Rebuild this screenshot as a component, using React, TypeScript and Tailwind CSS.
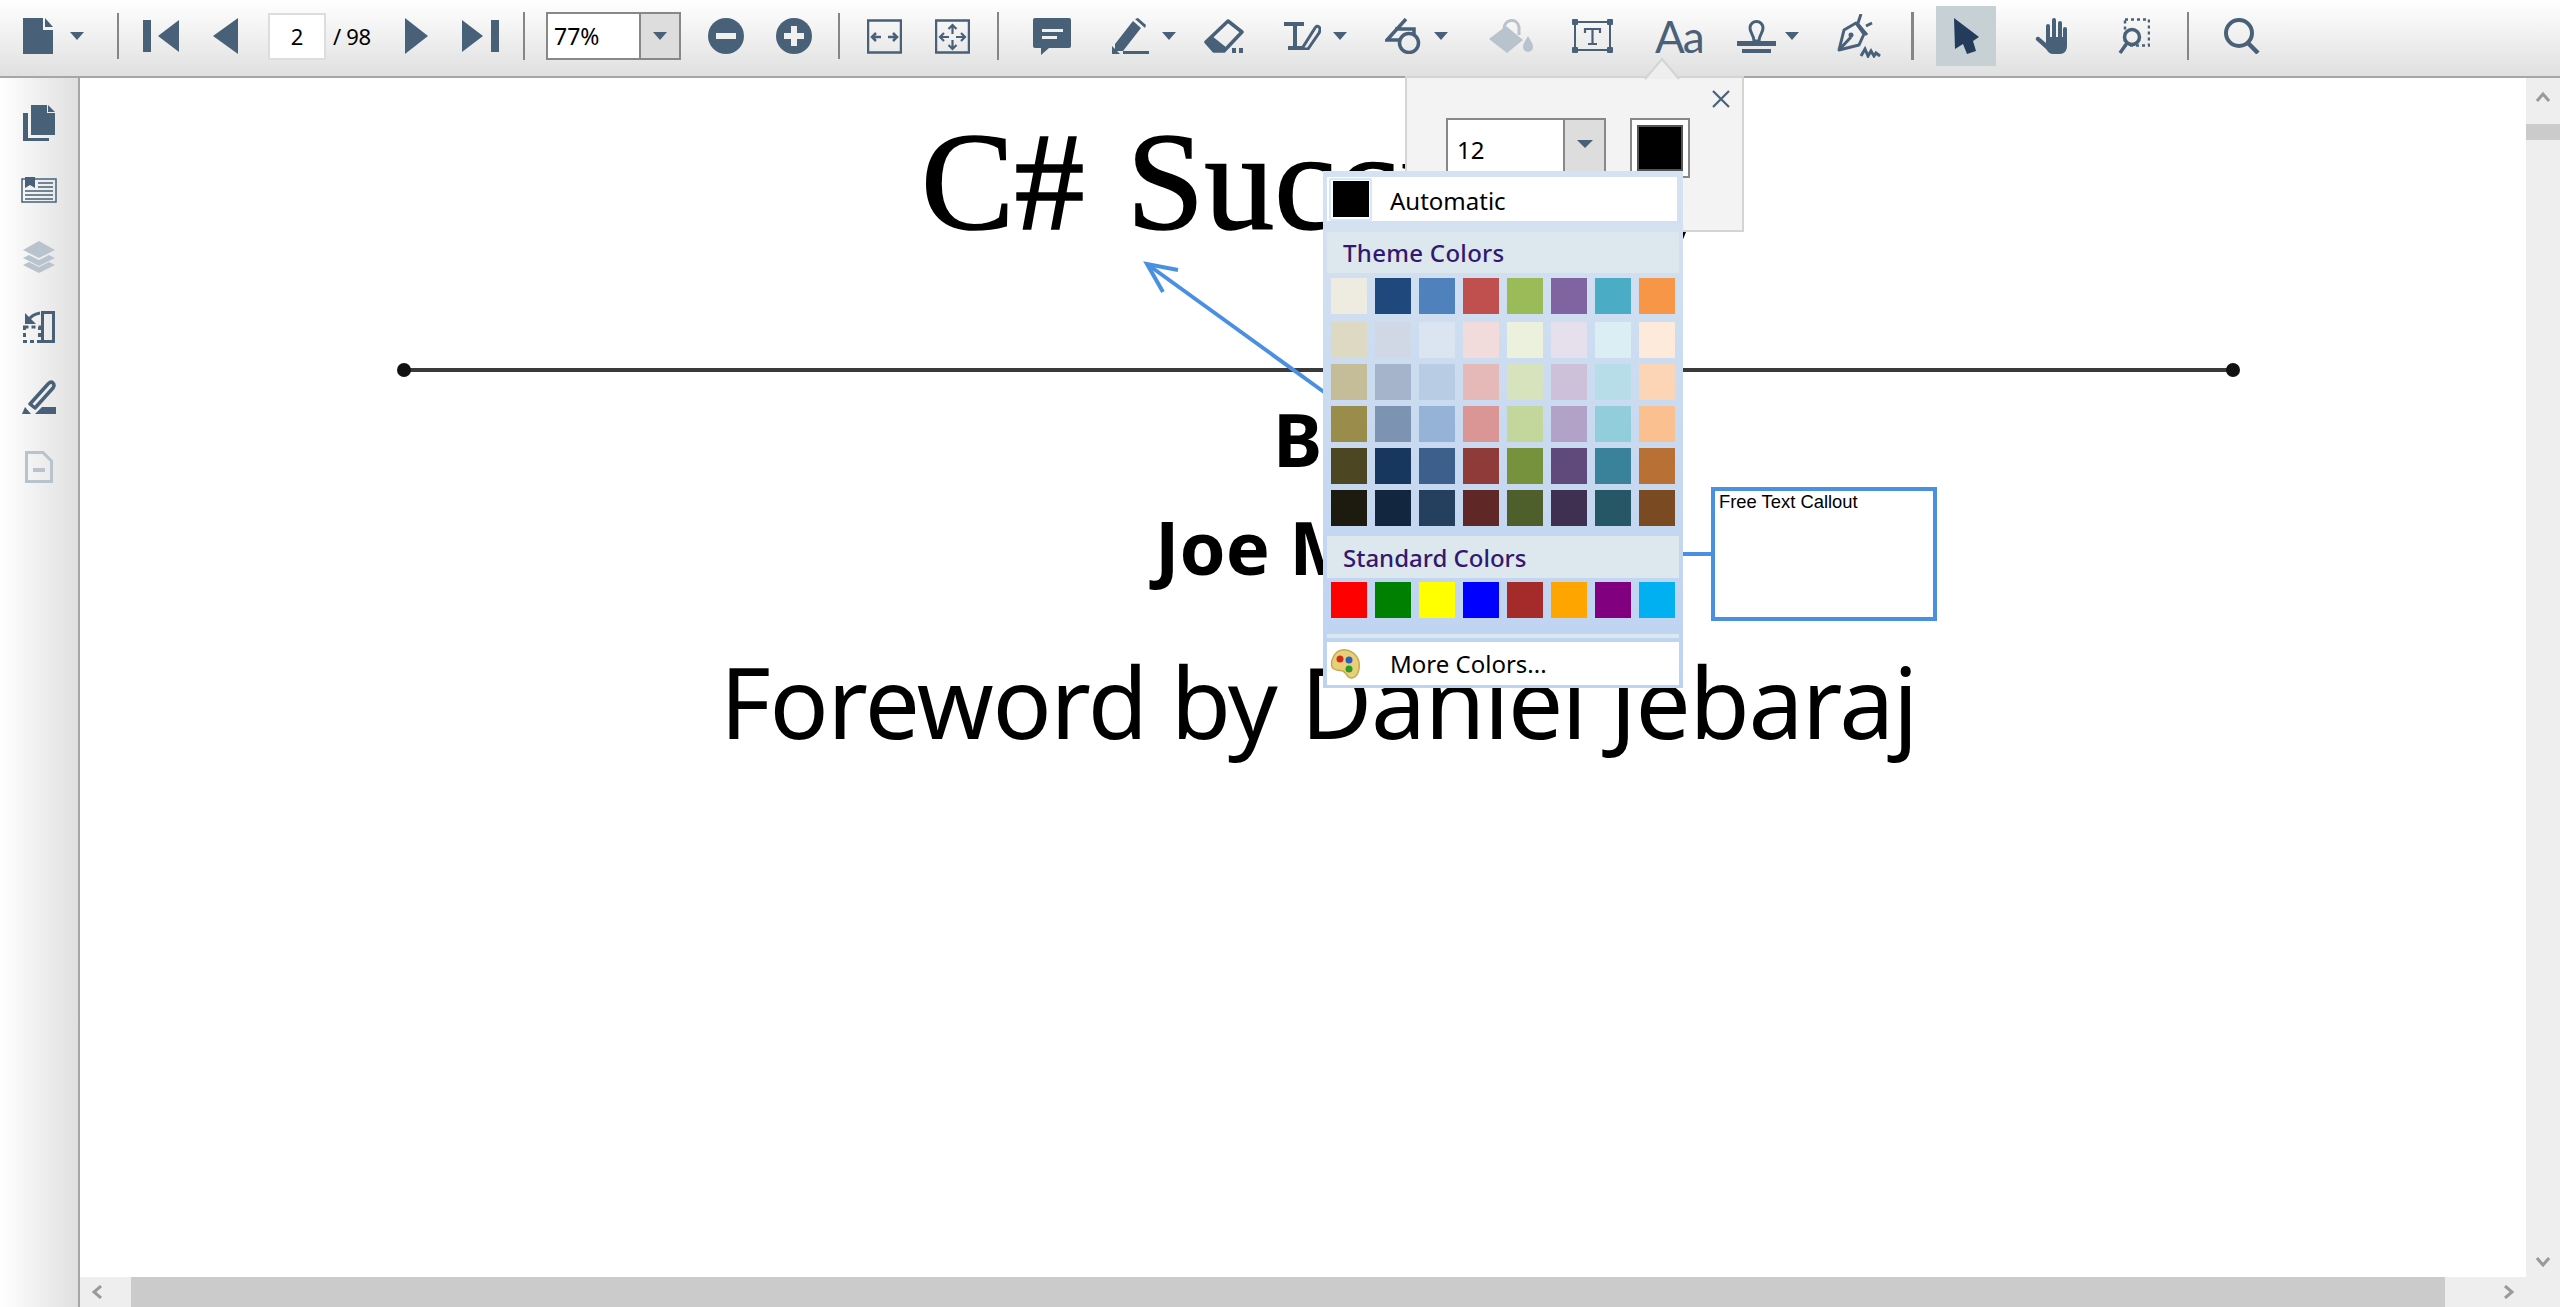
import type { ReactNode } from 'react';

const UI_FONT = "font-['Noto_Sans',sans-serif]";

const THEME_ROWS = [
  ['bg-[#eeece1]', 'bg-[#1f497d]', 'bg-[#4f81bd]', 'bg-[#c0504d]', 'bg-[#9bbb59]', 'bg-[#8064a2]', 'bg-[#4bacc6]', 'bg-[#f79646]'],
  ['bg-[#ddd9c3]', 'bg-[#d0d8e6]', 'bg-[#dbe5f1]', 'bg-[#f2dcdb]', 'bg-[#ebf1dd]', 'bg-[#e5e0ec]', 'bg-[#dbeef3]', 'bg-[#fdeada]'],
  ['bg-[#c4bd97]', 'bg-[#a5b4cb]', 'bg-[#b8cce4]', 'bg-[#e5b9b7]', 'bg-[#d7e3bc]', 'bg-[#ccc1d9]', 'bg-[#b7dde8]', 'bg-[#fbd5b5]'],
  ['bg-[#9a8d4c]', 'bg-[#7c93b2]', 'bg-[#95b3d7]', 'bg-[#d99694]', 'bg-[#c3d69b]', 'bg-[#b2a2c7]', 'bg-[#92cddc]', 'bg-[#fac08f]'],
  ['bg-[#4d4622]', 'bg-[#17375e]', 'bg-[#3c5f8c]', 'bg-[#8f3b39]', 'bg-[#76923c]', 'bg-[#604a7b]', 'bg-[#39829a]', 'bg-[#b87035]'],
  ['bg-[#1d1b10]', 'bg-[#12263f]', 'bg-[#25405f]', 'bg-[#5f2725]', 'bg-[#4f5f2c]', 'bg-[#3f3051]', 'bg-[#255767]', 'bg-[#7a4a22]'],
];

const STANDARD_ROW = ['bg-[#ff0000]', 'bg-[#008000]', 'bg-[#ffff00]', 'bg-[#0000ff]', 'bg-[#a52a2a]', 'bg-[#ffa500]', 'bg-[#800080]', 'bg-[#00b0f0]'];

// Small wrapper so every icon is drawn in its own pixel box
function Ico({ w, h, className = '', children }: { w: number; h: number; className?: string; children: ReactNode }) {
  return (
    <svg width={w} height={h} viewBox={`0 0 ${w} ${h}`} fill="currentColor" className={`shrink-0 ${className}`}>
      {children}
    </svg>
  );
}

function Caret({ className = '' }: { className?: string }) {
  return (
    <Ico w={14} h={8} className={className}>
      <path d="M0 0h14L7 8z" />
    </Ico>
  );
}

function Sep({ className = '' }: { className?: string }) {
  return <div className={`h-[46px] w-[2px] shrink-0 bg-[#868686] ${className}`} />;
}

function ColorRow({ colors, className = '' }: { colors: string[]; className?: string }) {
  return (
    <div className={`ml-[8px] flex gap-[8px] ${className}`}>
      {colors.map((c, i) => (
        <div key={i} className={`h-[36px] w-[36px] ${c}`} />
      ))}
    </div>
  );
}

function Toolbar() {
  return (
    <div className={`flex h-[78px] w-full shrink-0 items-center border-b-2 border-[#a6a6a6] bg-gradient-to-b from-white to-[#e0e0e0] pb-[4px] pl-[23px] text-[#486179] ${UI_FONT}`}>
      <Ico w={30} h={36}>
        <path d="M0 0h20v12h10v24H0z" />
        <path d="M22 0l8 9h-8z" />
      </Ico>
      <Caret className="ml-[17px]" />
      <Sep className="ml-[33px]" />
      <Ico w={36} h={32} className="ml-[24px]">
        <rect width="8" height="32" />
        <path d="M36 0v32L15 16z" />
      </Ico>
      <Ico w={25} h={36} className="ml-[34px]">
        <path d="M25 0v36L0 18z" />
      </Ico>
      <div className="ml-[30px] flex h-[47px] w-[58px] shrink-0 items-center justify-center border-2 border-[#dddddd] bg-white text-[22px] text-black">2</div>
      <span className="ml-[7px] w-[41px] shrink-0 whitespace-nowrap text-[22px] tracking-[-0.3px] text-black">/ 98</span>
      <Ico w={23} h={36} className="ml-[31px]">
        <path d="M0 0v36l23-18z" />
      </Ico>
      <Ico w={37} h={32} className="ml-[34px]">
        <path d="M0 0v32l21-16z" />
        <rect x="29" width="8" height="32" />
      </Ico>
      <Sep className="ml-[24px] h-[48px]" />
      <div className="ml-[21px] flex h-[48px] w-[135px] shrink-0 border-2 border-[#888888] bg-white">
        <div className="flex w-[91px] items-center pl-[6px] text-[23px] text-black">77%</div>
        <div className="flex flex-1 items-center justify-center border-l-2 border-[#888888] bg-[#dddddd]">
          <Caret />
        </div>
      </div>
      <Ico w={36} h={36} className="ml-[27px]">
        <circle cx="18" cy="18" r="18" />
        <rect x="8" y="15" width="20" height="6" fill="#f0f0f0" />
      </Ico>
      <Ico w={36} h={36} className="ml-[32px]">
        <circle cx="18" cy="18" r="18" />
        <path d="M15 8h6v7h7v6h-7v7h-6v-7H8v-6h7z" fill="#f0f0f0" />
      </Ico>
      <Sep className="ml-[26px]" />
      <Ico w={35} h={35} className="ml-[27px]">
        <rect x="1" y="1.5" width="33" height="32" fill="none" stroke="currentColor" strokeWidth="2.5" />
        <path d="M5 18h9M9 14l-4 4 4 4M30 18h-9M26 14l4 4-4 4" fill="none" stroke="currentColor" strokeWidth="2.5" />
      </Ico>
      <Ico w={35} h={35} className="ml-[33px]">
        <rect x="1" y="1.5" width="33" height="32" fill="none" stroke="currentColor" strokeWidth="2.5" />
        <path d="M5 18h9M9 14l-4 4 4 4M30 18h-9M26 14l4 4-4 4M17.5 6v9M13.5 10l4-4 4 4M17.5 30v-9M13.5 26l4 4 4-4" fill="none" stroke="currentColor" strokeWidth="2.2" />
      </Ico>
      <Sep className="ml-[27px] h-[48px]" />
      <Ico w={38} h={37} className="ml-[34px]">
        <path d="M2 0h34a2 2 0 0 1 2 2v26a2 2 0 0 1-2 2H16l-8 7v-7H2a2 2 0 0 1-2-2V2a2 2 0 0 1 2-2z" />
        <rect x="9" y="11" width="21" height="3" fill="#f0f0f0" />
        <rect x="9" y="18" width="15" height="3" fill="#f0f0f0" />
      </Ico>
      <Ico w={37} h={36} className="ml-[41px]">
        <path d="M3 26L21 3l8 7-18 23H3z" />
        <path d="M23 1l3-1 8 7-1 3z" />
        <path d="M0 28l8 8H0z" />
        <rect x="11" y="33" width="26" height="3" />
      </Ico>
      <Caret className="ml-[13px]" />
      <Ico w={40} h={34} className="ml-[28px]">
        <path d="M24 2l14 11-18 19H10l-8-9z" fill="none" stroke="currentColor" strokeWidth="3.5" strokeLinejoin="round" />
        <path d="M8 17l15 12-4 3H10l-8-9z" />
        <rect x="28" y="29" width="4" height="5" />
        <rect x="35" y="29" width="4" height="5" />
      </Ico>
      <Ico w={37} h={28} className="ml-[40px]">
        <path d="M0 0h20v4h-7v20h5v4H4v-4h5V4H0z" />
        <path d="M19 25L31 6q2-3 4-1t0 6L24 27h-5z" fill="none" stroke="currentColor" strokeWidth="3" />
      </Ico>
      <Caret className="ml-[12px]" />
      <Ico w={36} h={36} className="ml-[38px]">
        <path d="M21 1L2 22h13M10 11h19v7" fill="none" stroke="currentColor" strokeWidth="3.5" />
        <circle cx="24" cy="25" r="9.5" fill="none" stroke="currentColor" strokeWidth="3.5" />
      </Ico>
      <Caret className="ml-[13px]" />
      <Ico w={44} h={34} className="ml-[41px] text-[#b8c3ce]">
        <path d="M17 7l17 14-16 13L0 20z" />
        <path d="M15 10C15 0 28-2 30 8v8" fill="none" stroke="currentColor" strokeWidth="3" />
        <path d="M39 17c2 4 5 7 5 11a5 5 0 0 1-10 0c0-4 3-7 5-11z" />
      </Ico>
      <Ico w={41} h={34} className="ml-[39px]">
        <rect x="3" y="3" width="35" height="28" fill="none" stroke="currentColor" strokeWidth="2" />
        <rect width="6" height="6" rx="1" />
        <rect x="35" width="6" height="6" rx="1" />
        <rect y="28" width="6" height="6" rx="1" />
        <rect x="35" y="28" width="6" height="6" rx="1" />
        <path d="M13 14v-4h15v4M20.5 10v15M16 25h9" fill="none" stroke="currentColor" strokeWidth="2.2" />
      </Ico>
      <span className="ml-[42px] w-[45px] shrink-0 whitespace-nowrap font-['Lato',sans-serif] text-[44px] leading-none font-normal tracking-[-2px] text-[#486179]">Aa</span>
      <Ico w={39} h={33} className="ml-[37px]">
        <path d="M19.5 1.5a6.5 6.5 0 0 1 6.5 6.5c0 5-4 7-4 13h-5c0-6-4-8-4-13a6.5 6.5 0 0 1 6.5-6.5z" fill="none" stroke="currentColor" strokeWidth="3" />
        <rect y="21" width="39" height="5" />
        <rect x="5" y="29" width="29" height="4" />
      </Ico>
      <Caret className="ml-[9px]" />
      <Ico w={44} h={44} className="ml-[38px]">
        <path d="M2 36L7 16l12-7 8 11-5 11z" fill="none" stroke="currentColor" strokeWidth="3" strokeLinejoin="round" />
        <path d="M24 0l-3 9M20 9l10 12M29 12l6-3M2 36l12-13" fill="none" stroke="currentColor" strokeWidth="3" />
        <circle cx="14" cy="21" r="2.5" />
        <path d="M24 42l4-7 3 7 3-5 3 5 2-3 4 3" fill="none" stroke="currentColor" strokeWidth="3" />
      </Ico>
      <Sep className="ml-[30px] h-[48px] w-[3px]" />
      <div className="ml-[22px] flex h-[60px] w-[60px] shrink-0 items-center justify-center bg-[#c6d0d5]">
        <Ico w={25} h={36} className="text-[#243c5c]">
          <path d="M0 0l25 19-6 4 3 10-9 3-4-10-8 5z" />
        </Ico>
      </div>
      <Ico w={32} h={36} className="ml-[39px]">
        <rect x="11" y="6" width="4" height="18" rx="2" />
        <rect x="17" width="4" height="22" rx="2" />
        <rect x="23" y="3" width="4" height="20" rx="2" />
        <rect x="28" y="9" width="4" height="15" rx="2" />
        <path d="M11 19h21v9c0 5-3 8-7 8h-7c-3 0-5-2-7-5L1 22c-1-2 1-4 3-3l7 6z" />
      </Ico>
      <Ico w={32} h={36} className="ml-[51px]">
        <rect x="7" y="1.5" width="24" height="26" fill="none" stroke="currentColor" strokeWidth="2.5" strokeDasharray="3 3" />
        <circle cx="14" cy="19" r="7.5" fill="none" stroke="currentColor" strokeWidth="3.5" />
        <path d="M9 25l-7 10" fill="none" stroke="currentColor" strokeWidth="3.5" />
      </Ico>
      <Sep className="ml-[37px] h-[48px]" />
      <Ico w={36} h={36} className="ml-[35px]">
        <circle cx="15" cy="15" r="13" fill="none" stroke="currentColor" strokeWidth="4" />
        <path d="M24 25l10 10" fill="none" stroke="currentColor" strokeWidth="4.5" />
      </Ico>
    </div>
  );
}

function Rail() {
  return (
    <div className="flex w-[80px] shrink-0 flex-col items-center border-r-2 border-[#a6a6a6] bg-gradient-to-r from-white to-[#e0e0e0] pt-[27px] text-[#486179]">
      <Ico w={32} h={36}>
        <path d="M8 0h16v8h8v22H8z" />
        <path d="M25 0l7 7h-7z" />
        <path d="M0 8h5v25h21v3H0z" />
      </Ico>
      <Ico w={36} h={26} className="mt-[36px]">
        <rect x="1" y="2" width="34" height="23" fill="none" stroke="currentColor" strokeWidth="1.5" />
        <path d="M4 0h10v11l-5-3-5 3z" />
        <path d="M17 6h15M17 10h15M4 14h28M4 18h28M4 22h28" fill="none" stroke="currentColor" strokeWidth="1.5" />
      </Ico>
      <Ico w={32} h={32} className="mt-[38px] text-[#b8c3ce]">
        <path d="M16 0l16 9-16 8L0 9z" />
        <path d="M0 17l6-3 10 5 10-5 6 3-16 8z" />
        <path d="M0 24l6-3 10 5 10-5 6 3-16 8z" />
      </Ico>
      <Ico w={32} h={32} className="mt-[38px]">
        <rect x="19.5" y="1.5" width="11" height="29" fill="none" stroke="currentColor" strokeWidth="3" />
        <rect x="1.5" y="16" width="15" height="14.5" fill="none" stroke="currentColor" strokeWidth="3" strokeDasharray="4 3" />
        <path d="M17 2C11 3 7 6 5 10" fill="none" stroke="currentColor" strokeWidth="3" />
        <path d="M2 2v11h11z" />
      </Ico>
      <Ico w={34} h={34} className="mt-[37px]">
        <path d="M8 24L26 4q3-3 5-1t0 5L13 28z" fill="none" stroke="currentColor" strokeWidth="3.5" strokeLinejoin="round" />
        <path d="M0 34l3-7 6 7z" />
        <path d="M13 34l7-7h14v7z" />
      </Ico>
      <Ico w={28} h={32} className="mt-[37px] text-[#b8c3ce]">
        <path d="M1.5 1.5H18l8.5 8.5v20.5h-25z" fill="none" stroke="currentColor" strokeWidth="3" />
        <rect x="8" y="17" width="12" height="4" />
      </Ico>
    </div>
  );
}

// Page content: the PDF is a free canvas, so text and annotations sit at their own coordinates
function PdfPage() {
  return (
    <div className="relative flex-1 overflow-hidden bg-white text-black">
      <div className="absolute left-[841px] top-[24px] whitespace-nowrap font-['Liberation_Serif',serif] text-[140px] leading-[160px] [-webkit-text-stroke:1.5px_#000] [word-spacing:7px]">C# Succinctly</div>
      <div className={`absolute left-[1193px] top-[311px] whitespace-nowrap text-[74px] leading-[100px] font-bold tracking-[8px] ${UI_FONT}`}>By</div>
      <div className={`absolute left-[1075px] top-[419px] whitespace-nowrap text-[74px] leading-[100px] font-bold ${UI_FONT}`}>Joe Mayo</div>
      <div className={`absolute left-[640px] top-[558px] whitespace-nowrap text-[98px] leading-[130px] tracking-[-1.3px] ${UI_FONT}`}>Foreword by Daniel Jebaraj</div>
      <svg className="absolute left-0 top-0" width="2446" height="700" viewBox="0 0 2446 700">
        <path d="M324 292H2153" stroke="#3a3a3a" strokeWidth="4" fill="none" />
        <circle cx="324" cy="292" r="7" fill="#111111" />
        <circle cx="2153" cy="292" r="7" fill="#111111" />
        <path d="M1067 186L1244 314" stroke="#4a90e2" strokeWidth="4" fill="none" />
        <path d="M1098 192L1067 186L1083 214" stroke="#4a90e2" strokeWidth="4" fill="none" />
        <path d="M1600 476H1631" stroke="#4a90e2" strokeWidth="4" fill="none" />
      </svg>
      <div className="absolute left-[1631px] top-[409px] h-[134px] w-[226px] border-4 border-[#4a90e2] bg-white pl-[4px] pt-[1px] font-['Liberation_Sans',sans-serif] text-[18.4px] leading-[20px] text-black">Free Text Callout</div>
    </div>
  );
}

function VerticalScrollbar() {
  return (
    <div className="flex w-[34px] shrink-0 flex-col items-center bg-[#eeeeee] pb-[10px] pt-[13px] text-[#9a9a9a]">
      <Ico w={14} h={11}>
        <path d="M1 10l6-7 6 7" fill="none" stroke="currentColor" strokeWidth="3" />
      </Ico>
      <div className="mt-[22px] h-[16px] w-full bg-[#cbcbcb]" />
      <div className="flex-1" />
      <Ico w={14} h={10}>
        <path d="M1 1l6 7 6-7" fill="none" stroke="currentColor" strokeWidth="3" />
      </Ico>
    </div>
  );
}

function HorizontalScrollbar() {
  return (
    <div className="flex h-[30px] shrink-0 items-center bg-[#eeeeee] text-[#9a9a9a]">
      <div className="flex w-[51px] shrink-0 items-center pl-[12px]">
        <Ico w={10} h={14}>
          <path d="M9 1L2 7l7 6" fill="none" stroke="currentColor" strokeWidth="3" />
        </Ico>
      </div>
      <div className="h-full flex-1 bg-[#cbcbcb]" />
      <div className="flex w-[115px] shrink-0 items-center pl-[59px]">
        <Ico w={10} h={14}>
          <path d="M1 1l7 6-7 6" fill="none" stroke="currentColor" strokeWidth="3" />
        </Ico>
      </div>
    </div>
  );
}

function FreeTextPanel() {
  return (
    <div className={`absolute left-[1405px] top-[76px] h-[156px] w-[339px] border-2 border-[#d4d4d4] bg-[#f3f3f3] pl-[39px] pt-[40px] ${UI_FONT}`}>
      <svg className="absolute left-[237px] top-[-20px]" width="36" height="22" viewBox="0 0 36 22">
        <path d="M1 21L18 1l17 20" fill="#eeeeee" stroke="#d4d4d4" strokeWidth="2" />
      </svg>
      <button className="absolute left-[305px] top-[12px] text-[#486179]">
        <Ico w={18} h={18} className="block">
          <path d="M1 1l16 16M17 1L1 17" fill="none" stroke="currentColor" strokeWidth="2.2" />
        </Ico>
      </button>
      <div className="flex items-start gap-[24px]">
        <div className="flex h-[60px] w-[160px] border-2 border-[#888888] bg-white">
          <div className="flex h-[56px] w-[115px] items-center pl-[9px] pt-[4px] text-[24px] text-black">12</div>
          <div className="flex flex-1 justify-center border-l-2 border-[#888888] bg-[#dddddd] pt-[20px] text-[#486179]">
            <Ico w={16} h={8}>
              <path d="M0 0h16L8 8z" />
            </Ico>
          </div>
        </div>
        <div className="flex h-[60px] w-[60px] items-center justify-center border-2 border-[#888888] bg-white">
          <div className="h-[46px] w-[46px] border-2 border-[#555555] bg-black" />
        </div>
      </div>
    </div>
  );
}

function PaletteIcon() {
  return (
    <Ico w={30} h={30} className="shrink-0">
      <path d="M12 1c8-1 15 4 17 12 1 7-1 15-7 16-5 1-5-5-9-7-4-1-9 0-11-4C0 11 5 2 12 1z" fill="#e8cf7a" stroke="#c9a94f" strokeWidth="1.5" />
      <circle cx="10" cy="10" r="3.5" fill="#cc2a1a" />
      <circle cx="19" cy="11" r="3.5" fill="#2a5fc0" />
      <circle cx="19" cy="20" r="3.5" fill="#2a9a2a" />
    </Ico>
  );
}

function ColorMenu() {
  return (
    <div className={`absolute left-[1323px] top-[171px] flex h-[517px] w-[360px] flex-col bg-gradient-to-b from-[#d5e2f1] via-[#c9daf0] to-[#bdd3f2] pt-[6px] text-black ${UI_FONT}`}>
      <div className="ml-[4px] flex h-[44px] w-[350px] items-center bg-white">
        <div className="ml-[2px] flex h-[43px] w-[43px] items-center justify-center rounded-[2px] border-2 border-[#d5e8fb]">
          <div className="h-[36px] w-[36px] bg-black" />
        </div>
        <span className="ml-[18px] pt-[3px] text-[24px] leading-none">Automatic</span>
      </div>
      <div className="ml-[4px] mt-[11px] flex h-[41px] w-[352px] items-center bg-[#dde7ee] pl-[16px] text-[24px] font-medium tracking-[0.3px] text-[#34186f]">Theme Colors</div>
      <ColorRow colors={THEME_ROWS[0]} className="mt-[5px]" />
      <ColorRow colors={THEME_ROWS[1]} className="mt-[8px]" />
      <ColorRow colors={THEME_ROWS[2]} className="mt-[6px]" />
      <ColorRow colors={THEME_ROWS[3]} className="mt-[6px]" />
      <ColorRow colors={THEME_ROWS[4]} className="mt-[6px]" />
      <ColorRow colors={THEME_ROWS[5]} className="mt-[6px]" />
      <div className="ml-[4px] mt-[10px] flex h-[42px] w-[352px] items-center bg-[#dde7ee] pl-[16px] pt-[2px] text-[24px] font-medium text-[#34186f]">Standard Colors</div>
      <ColorRow colors={STANDARD_ROW} className="mt-[4px]" />
      <div className="ml-[4px] mt-[16px] h-[4px] w-[352px] bg-[#dde7ee]" />
      <div className="ml-[4px] mt-[4px] flex h-[43px] w-[352px] items-center bg-white pl-[3px]">
        <PaletteIcon />
        <span className="ml-[30px] text-[24px] leading-none">More Colors...</span>
      </div>
    </div>
  );
}

export default function App() {
  return (
    <div className="relative flex h-[1307px] w-[2560px] flex-col overflow-hidden bg-white">
      <Toolbar />
      <div className="flex min-h-0 flex-1">
        <Rail />
        <div className="flex min-w-0 flex-1 flex-col">
          <div className="flex min-h-0 flex-1">
            <PdfPage />
            <VerticalScrollbar />
          </div>
          <HorizontalScrollbar />
        </div>
      </div>
      <FreeTextPanel />
      <ColorMenu />
    </div>
  );
}
